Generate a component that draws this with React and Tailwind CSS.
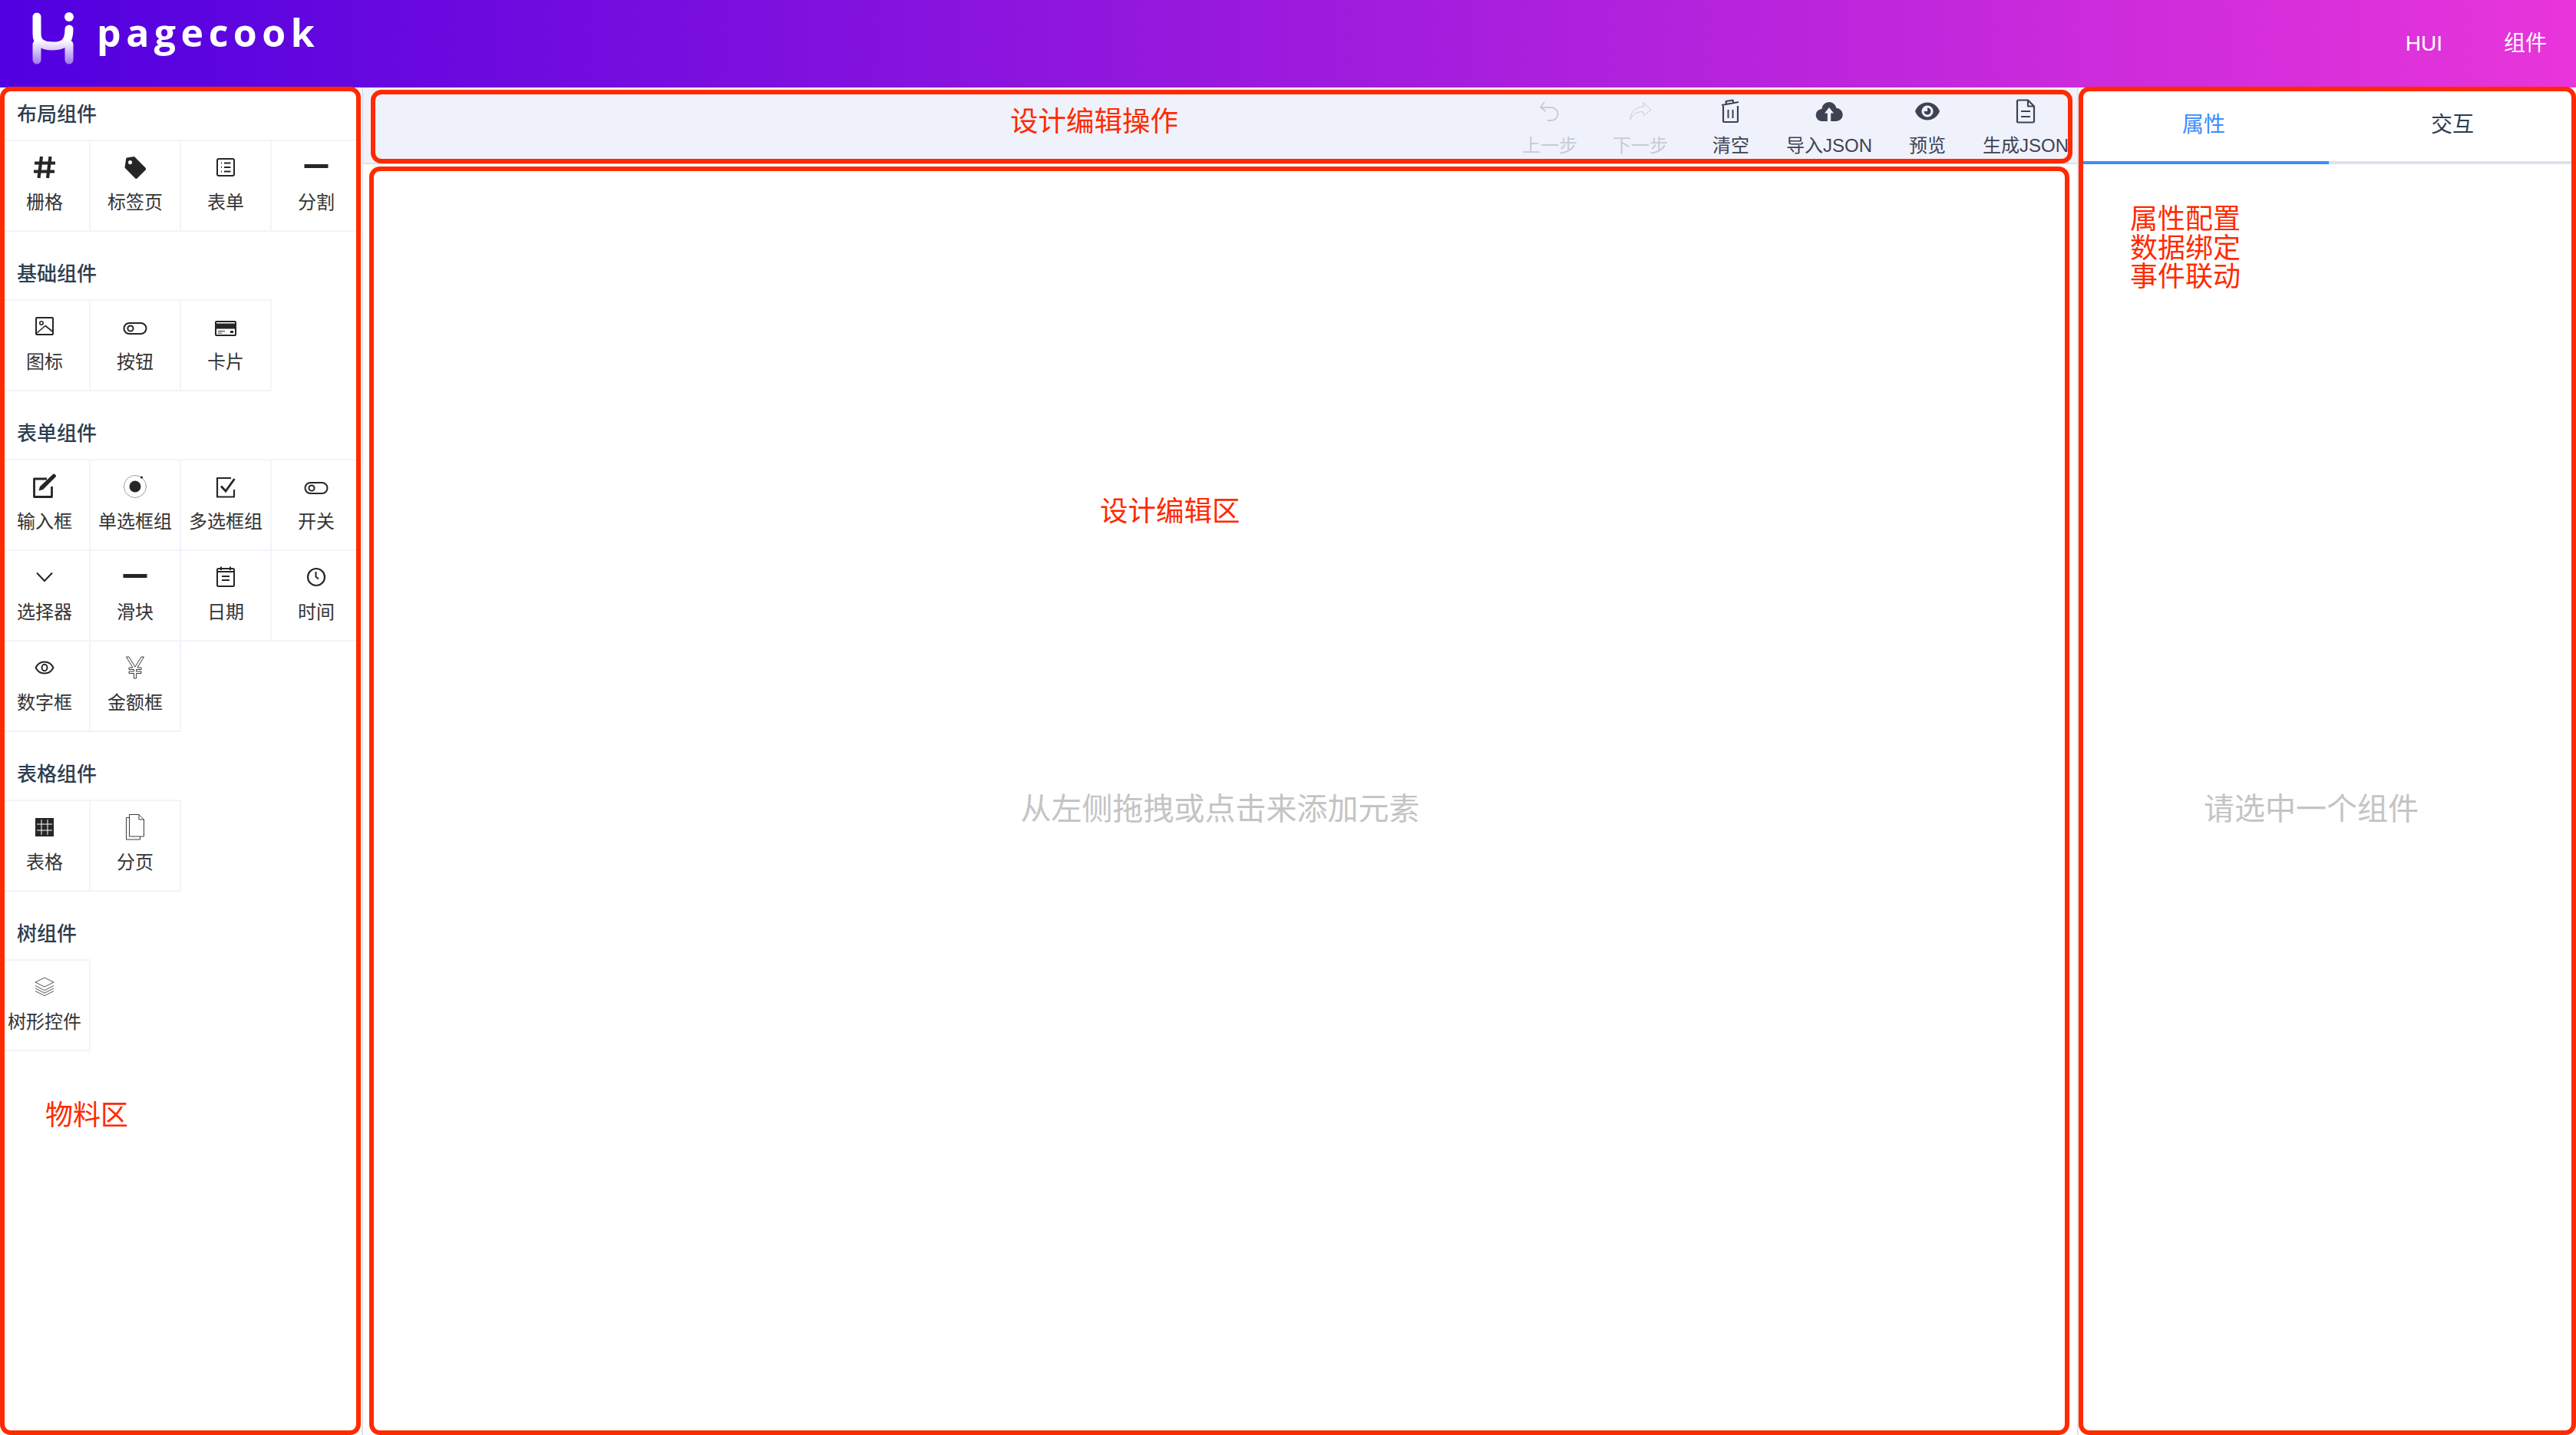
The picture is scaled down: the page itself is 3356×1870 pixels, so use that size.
import React from 'react';

const FONT = "font-['Liberation_Sans','Noto_Sans_CJK_SC',sans-serif]";

// every icon is drawn on a 40x40 box, centre of the box = centre of the icon slot
const Svg = ({ children }) => (
  <svg width="40" height="40" viewBox="0 0 40 40" fill="none" stroke="currentColor" strokeWidth="2" strokeLinecap="round" strokeLinejoin="round">
    {children}
  </svg>
);

const icons = {
  hash: (
    <Svg>
      <path d="M16 6 12.500 34M27.500 6 24 34M7 14.500H34M6 25.500H33" strokeWidth="4.200" strokeLinecap="butt" />
    </Svg>
  ),
  tag: (
    <Svg>
      <path fillRule="evenodd" stroke="none" fill="currentColor" d="M8 10.500a3 3 0 0 1 2.600-3.200l8.400-1.200 14.600 14.600a2 2 0 0 1 0 2.800L22.800 34.300a2 2 0 0 1-2.800 0L6.500 20.500ZM13.500 11a2.600 2.600 0 1 0 .100 0Z" />
      <path d="M21 5.500 35 19.500" stroke="#fff" strokeWidth="1.200" />
    </Svg>
  ),
  form: (
    <Svg>
      <rect x="9" y="9" width="22" height="22" rx="2" />
      <path d="M14 14.500h1M14 20h1M14 25.500h1M18 14.500h8.500M18 20h8.500M18 25.500h8.500" strokeLinecap="butt" />
    </Svg>
  ),
  bar: (
    <Svg>
      <rect x="4.500" y="16" width="31" height="5" fill="currentColor" stroke="none" />
    </Svg>
  ),
  image: (
    <Svg>
      <rect x="9" y="8" width="22" height="22" rx="1" />
      <circle cx="16" cy="15" r="2.200" strokeWidth="1.600" />
      <path d="M10 28 21 18.500 30.500 26" strokeWidth="1.600" />
    </Svg>
  ),
  toggle: (
    <Svg>
      <rect x="5.500" y="15" width="29" height="14" rx="7" />
      <circle cx="14" cy="22" r="3.600" />
    </Svg>
  ),
  card: (
    <Svg>
      <g transform="translate(0 2)">
        <path fill="currentColor" stroke="none" fillRule="evenodd" d="M8 10h24a2 2 0 0 1 2 2v16a2 2 0 0 1-2 2H8a2 2 0 0 1-2-2V12a2 2 0 0 1 2-2ZM8 12v1.500h24V12ZM8 20.500V28h24v-7.500Z" />
        <path d="M10 23.500h9M10 26h5" strokeWidth="1.200" strokeLinecap="butt" />
        <rect x="26" y="23" width="4" height="3" fill="currentColor" stroke="none" />
      </g>
    </Svg>
  ),
  edit: (
    <Svg>
      <path d="M23 10H6.500v23.500h23V20" strokeWidth="2.800" strokeLinecap="butt" />
      <path fill="currentColor" stroke="none" d="M30.500 4.500a2.300 2.300 0 0 1 3.500 0 2.300 2.300 0 0 1 0 3.500L18 24l-5.500 1.500L14 20Z" />
    </Svg>
  ),
  radio: (
    <Svg>
      <circle cx="20" cy="20" r="14.500" strokeWidth="0.700" stroke="#777" />
      <circle cx="20" cy="20" r="7.500" fill="currentColor" stroke="none" />
      <circle cx="28.500" cy="8" r="1.600" fill="currentColor" stroke="none" />
    </Svg>
  ),
  check: (
    <Svg>
      <path d="M31 24v9.500H9V9h18" strokeWidth="2.200" strokeLinecap="butt" />
      <path d="M14 19.500 20 26 31.500 10" strokeWidth="2.800" strokeLinecap="butt" strokeLinejoin="miter" />
    </Svg>
  ),
  chevron: (
    <Svg>
      <path d="M10 14.500 20 25 30 14.500" strokeLinecap="butt" strokeLinejoin="miter" />
    </Svg>
  ),
  date: (
    <Svg>
      <rect x="9" y="9" width="22" height="23" rx="1.500" />
      <path d="M9 13h22M14 6.500V11M26 6.500V11M15 19h10M15 24h10" strokeLinecap="butt" />
    </Svg>
  ),
  clock: (
    <Svg>
      <circle cx="20" cy="20" r="11" strokeWidth="2.200" />
      <path d="M19.500 13v6.500l3.500 3" strokeLinecap="butt" />
    </Svg>
  ),
  view: (
    <Svg>
      <path d="M8.500 20C11 15 15 12.500 20 12.500S29 15 31.500 20C29 25 25 27.500 20 27.500S11 25 8.500 20Z" />
      <ellipse cx="20" cy="20" rx="3.500" ry="4.200" strokeWidth="2" />
    </Svg>
  ),
  yen: (
    <Svg>
      <path strokeWidth="0.900" strokeLinecap="butt" strokeLinejoin="miter" d="M8.500 6H12L20 19 28 6h3.500L23 20h5v2.500h-6.500V25H28v2.500h-6.500V34h-3V27.500H12V25h6.500V22.500H12V20h5Z" />
    </Svg>
  ),
  table: (
    <Svg>
      <rect x="8" y="8" width="24" height="24" fill="currentColor" stroke="none" />
      <path d="M10 16h20M10 24h20M16 10v20M24 10v20" stroke="#fff" strokeWidth="1" strokeLinecap="butt" />
    </Svg>
  ),
  pages: (
    <Svg>
      <path strokeWidth="0.900" strokeLinecap="butt" strokeLinejoin="miter" d="M12.500 3.500H25l6.500 6.500V32H12.500ZM25 3.500V10h6.500M12.500 7.500H8.500V36H26.500V32" />
    </Svg>
  ),
  layers: (
    <Svg>
      <path strokeWidth="0.800" strokeLinecap="butt" strokeLinejoin="miter" d="M20 8 32 14 20 20 8 14ZM8 18.500 20 24.500 32 18.500M8 22 20 28 32 22M8 25.500 20 31.500 32 25.500" />
    </Svg>
  ),
  undo: (
    <Svg>
      <path d="M13 8 8 15l7 5M9 15h13a8.500 8.500 0 0 1 0 17h-5" strokeLinecap="butt" strokeLinejoin="miter" strokeWidth="1.800" />
    </Svg>
  ),
  redo: (
    <Svg>
      <path d="M24 9 34 18 24 26V21C15 20 10 24 7 31 7 22 12 15 24 14Z" strokeWidth="1" />
    </Svg>
  ),
  trash: (
    <Svg>
      <path d="M10 13V33a1 1 0 0 0 1 1H28a1 1 0 0 0 1-1V13" strokeWidth="2.200" strokeLinecap="butt" />
      <path d="M8 12 30 8M14 10l-.500-3 9-1.500.500 3" strokeWidth="2.200" strokeLinecap="butt" />
      <path d="M16.500 18V29M22.500 18V29" strokeLinecap="butt" />
    </Svg>
  ),
  cloud: (
    <Svg>
      <path fill="currentColor" stroke="none" fillRule="evenodd" d="M20 8a9.500 9.500 0 0 1 9.300 7.800A8 8 0 0 1 29 33H11a8 8 0 0 1-.700-16A9.500 9.500 0 0 1 20 8ZM20 15l-6 7.500h3.800V33h4.400V22.500H26Z" />
    </Svg>
  ),
  eye: (
    <Svg>
      <path fill="currentColor" stroke="none" fillRule="evenodd" d="M4 20C7 12.500 13 8.500 20 8.500S33 12.500 36 20C33 27.500 27 31.500 20 31.500S7 27.500 4 20ZM20 12.500a7.500 7.500 0 1 0 .100 0ZM20 15.500a4.500 4.500 0 1 1-4.500 4.500H20Z" />
    </Svg>
  ),
  doc: (
    <Svg>
      <path d="M9 7a1.500 1.500 0 0 1 1.500-1.500H23L31 13.500V33a1.500 1.500 0 0 1-1.500 1.500H10.500A1.500 1.500 0 0 1 9 33ZM23 5.500V13.500H31" strokeWidth="2.200" />
      <path d="M14 20H26M14 27H26" strokeWidth="2.200" strokeLinecap="butt" />
    </Svg>
  ),
};

const groups = [
  { title: '布局组件', items: [['栅格', 'hash'], ['标签页', 'tag'], ['表单', 'form'], ['分割', 'bar']] },
  { title: '基础组件', items: [['图标', 'image'], ['按钮', 'toggle'], ['卡片', 'card']] },
  {
    title: '表单组件',
    items: [
      ['输入框', 'edit'], ['单选框组', 'radio'], ['多选框组', 'check'], ['开关', 'toggle'],
      ['选择器', 'chevron'], ['滑块', 'bar'], ['日期', 'date'], ['时间', 'clock'],
      ['数字框', 'view'], ['金额框', 'yen'],
    ],
  },
  { title: '表格组件', items: [['表格', 'table'], ['分页', 'pages']] },
  { title: '树组件', items: [['树形控件', 'layers']] },
];

const tools = [
  ['上一步', 'undo', true], ['下一步', 'redo', true], ['清空', 'trash'],
  ['导入JSON', 'cloud'], ['预览', 'eye'], ['生成JSON', 'doc'],
];

function Sidebar() {
  return (
    <aside className="w-[473px] shrink-0 bg-white border-r-2 border-[#dfe2e9]">
      {groups.map((group) => (
        <section key={group.title} className="mb-[20px]">
          <h3 className="h-[68px] pl-[22px] pt-[3px] flex items-center text-[26px] font-medium text-[#2c3e50]">{group.title}</h3>
          <div className="grid grid-cols-[repeat(4,118px)] auto-rows-[118px] pb-[2px]">
            {group.items.map(([label, icon]) => (
              <div key={label} className="h-[120px] border-y-2 border-r-2 border-[#f1f4fa] flex flex-col items-center text-[#333]">
                <div className="mt-[14px] h-[40px] flex items-center justify-center text-[#262626]">{icons[icon]}</div>
                <span className="mt-[10px] h-[32px] leading-[32px] text-[24px] whitespace-nowrap">{label}</span>
              </div>
            ))}
          </div>
        </section>
      ))}
    </aside>
  );
}

function Toolbar() {
  return (
    <div className="h-[100px] shrink-0 flex justify-end -mr-[2px] bg-[#eff2fb] border-b-2 border-[#dfe2e9]">
      {tools.map(([label, icon, disabled]) => (
        <button key={label} className={`min-w-[118px] px-[13px] flex flex-col items-center ${disabled ? 'text-[#c6cbd6]' : 'text-[#3e4354]'}`}>
          <span className="mt-[11px] h-[40px] flex items-center">{icons[icon]}</span>
          <span className="mt-[9px] h-[32px] leading-[32px] text-[24px] whitespace-nowrap">{label}</span>
        </button>
      ))}
    </div>
  );
}

function Annotations() {
  const box = 'absolute border-[6px] border-[#ff2a00] rounded-[14px] pointer-events-none';
  const note = 'absolute text-[#ff2a00] whitespace-nowrap pointer-events-none';
  return (
    <>
      <div className={`${box} left-0 top-[113px] w-[470px] h-[1757px]`} />
      <div className={`${box} left-[483px] top-[117px] w-[2217px] h-[96px]`} />
      <div className={`${box} left-[481px] top-[217px] w-[2215px] h-[1653px]`} />
      <div className={`${box} left-[2708px] top-[113px] w-[648px] h-[1757px]`} />
      <span className={`${note} left-[59px] top-[1433px] text-[36px] leading-[42px]`}>物料区</span>
      <span className={`${note} left-[1316px] top-[138px] text-[36.5px] leading-[42px]`}>设计编辑操作</span>
      <span className={`${note} left-[1433px] top-[646px] text-[36.5px] leading-[42px]`}>设计编辑区</span>
      <div className={`${note} left-[2775px] top-[267px] text-[36px] leading-[37.5px]`}>
        <div>属性配置</div>
        <div>数据绑定</div>
        <div>事件联动</div>
      </div>
    </>
  );
}

export default function App() {
  return (
    <div className={`relative w-[3356px] h-[1870px] overflow-hidden flex flex-col bg-white ${FONT}`}>
      {/* Header */}
      <header className="h-[114px] shrink-0 flex items-center justify-between bg-[linear-gradient(90deg,#5000e0,#e835da)] text-white">
        <div className="flex items-start pl-[40px] pt-[14px] self-start">
          <svg width="60" height="70" viewBox="0 0 60 70" fill="none">
            <defs>
              <linearGradient id="fade" gradientUnits="userSpaceOnUse" x1="0" y1="0" x2="0" y2="70">
                <stop offset="0.55" stopColor="#fff" />
                <stop offset="1" stopColor="#fff" stopOpacity="0.45" />
              </linearGradient>
            </defs>
            <path d="M8 8V30C8 42 16 46 29 46S50 42 50 24M8 44V64M50 44V64" stroke="url(#fade)" strokeWidth="11" strokeLinecap="round" />
            <circle cx="50" cy="8" r="6" fill="#fff" />
          </svg>
          <span className="ml-[26px] mt-[-7px] text-[50px] leading-[70px] font-bold tracking-[6.500px] font-['Open_Sans',sans-serif]">pagecook</span>
        </div>
        <nav className="flex items-center gap-[80px] pr-[38px] text-[28px]">
          <span>HUI</span>
          <span>组件</span>
        </nav>
      </header>

      <div className="flex-1 flex min-h-0">
        <Sidebar />

        <main className="flex-1 flex flex-col min-w-0">
          <Toolbar />
          <div className="flex-1 flex items-center justify-center pt-[24px] text-[40px] text-[#c4c4c4]">
            从左侧拖拽或点击来添加元素
          </div>
        </main>

        <aside className="w-[650px] shrink-0 flex flex-col bg-white border-l-2 border-[#dfe2e9]">
          <div className="h-[100px] shrink-0 flex border-b-4 border-[#dfe2e9] text-[28px]">
            <div className="w-[326px] -mb-[4px] pt-[2px] flex items-center justify-center border-b-4 border-[#3b8cff] text-[#3b8cff]">属性</div>
            <div className="flex-1 pt-[2px] flex items-center justify-center text-[#2c3e50]">交互</div>
          </div>
          <div className="flex-1 flex items-center justify-center pt-[24px] pr-[42px] text-[40px] text-[#c4c4c4]">
            请选中一个组件
          </div>
        </aside>
      </div>

      <Annotations />
    </div>
  );
}
